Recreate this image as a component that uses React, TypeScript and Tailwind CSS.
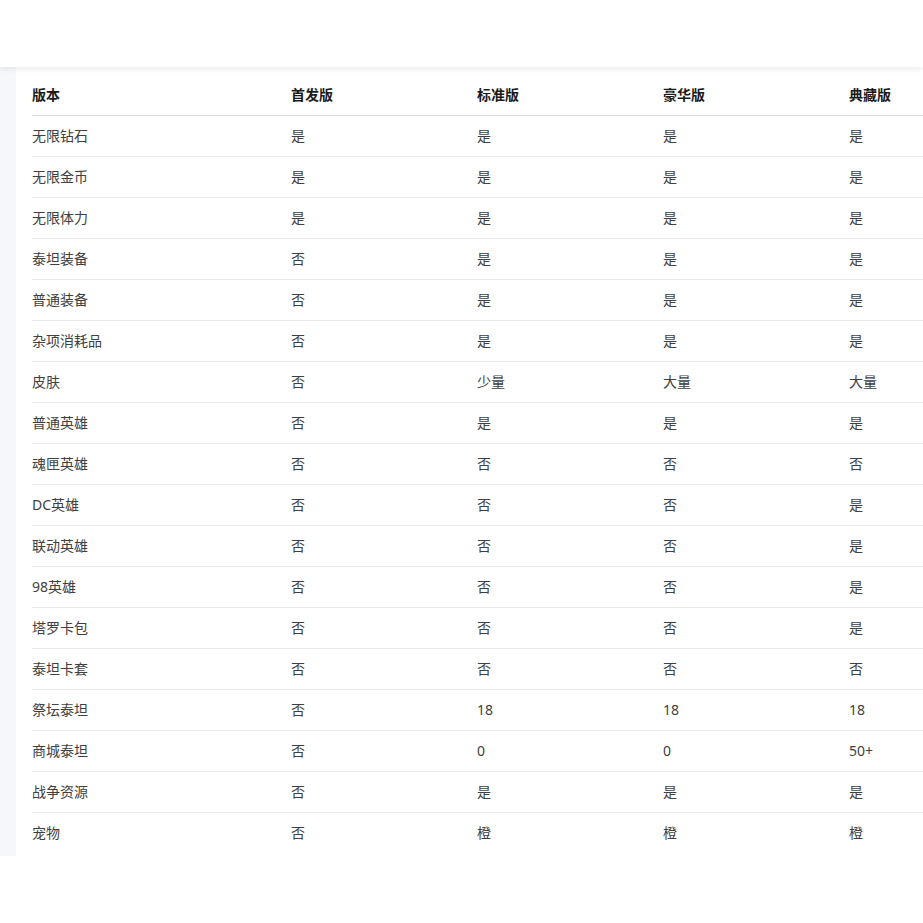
import React from "react";

const cols = ["版本", "首发版", "标准版", "豪华版", "典藏版"];
const rows: string[][] = [
  ["无限钻石", "是", "是", "是", "是"],
  ["无限金币", "是", "是", "是", "是"],
  ["无限体力", "是", "是", "是", "是"],
  ["泰坦装备", "否", "是", "是", "是"],
  ["普通装备", "否", "是", "是", "是"],
  ["杂项消耗品", "否", "是", "是", "是"],
  ["皮肤", "否", "少量", "大量", "大量"],
  ["普通英雄", "否", "是", "是", "是"],
  ["魂匣英雄", "否", "否", "否", "否"],
  ["DC英雄", "否", "否", "否", "是"],
  ["联动英雄", "否", "否", "否", "是"],
  ["98英雄", "否", "否", "否", "是"],
  ["塔罗卡包", "否", "否", "否", "是"],
  ["泰坦卡套", "否", "否", "否", "否"],
  ["祭坛泰坦", "否", "18", "18", "18"],
  ["商城泰坦", "否", "0", "0", "50+"],
  ["战争资源", "否", "是", "是", "是"],
  ["宠物", "否", "橙", "橙", "橙"],
];

const font = {
  fontFamily: '"Segoe UI", "Noto Sans", "Noto Sans CJK SC", sans-serif',
};

export default function App() {
  return (
    <div className="w-[923px] min-h-[923px] bg-white overflow-hidden" style={font}>
      <div className="relative z-10 h-[67px] bg-white shadow-[0_2px_6px_rgba(0,0,0,0.08)]" />
      <div className="flex">
        <div className="w-4 shrink-0 bg-[#f5f7fa]" />
        <div className="flex-1 overflow-hidden bg-white pl-4 pt-2 pb-[2px]">
          <div className="w-[1003px]">
            <div className="grid grid-cols-[259px_186px_186px_186px_186px] h-[41px] pb-[2px] items-center border-b border-[#dcdcdc] text-[14px] font-bold text-[#1a1a1a]">
              {cols.map((c) => (
                <div key={c}>{c}</div>
              ))}
            </div>
            {rows.map((r, i) => (
              <div
                key={i}
                className={`grid grid-cols-[259px_186px_186px_186px_186px] h-[41px] pb-[2px] items-center text-[14px] text-[#404040] ${
                  i < rows.length - 1 ? "border-b border-[#ebebeb]" : ""
                }`}
              >
                {r.map((c, j) => (
                  <div key={j}>{c}</div>
                ))}
              </div>
            ))}
          </div>
        </div>
      </div>
    </div>
  );
}
